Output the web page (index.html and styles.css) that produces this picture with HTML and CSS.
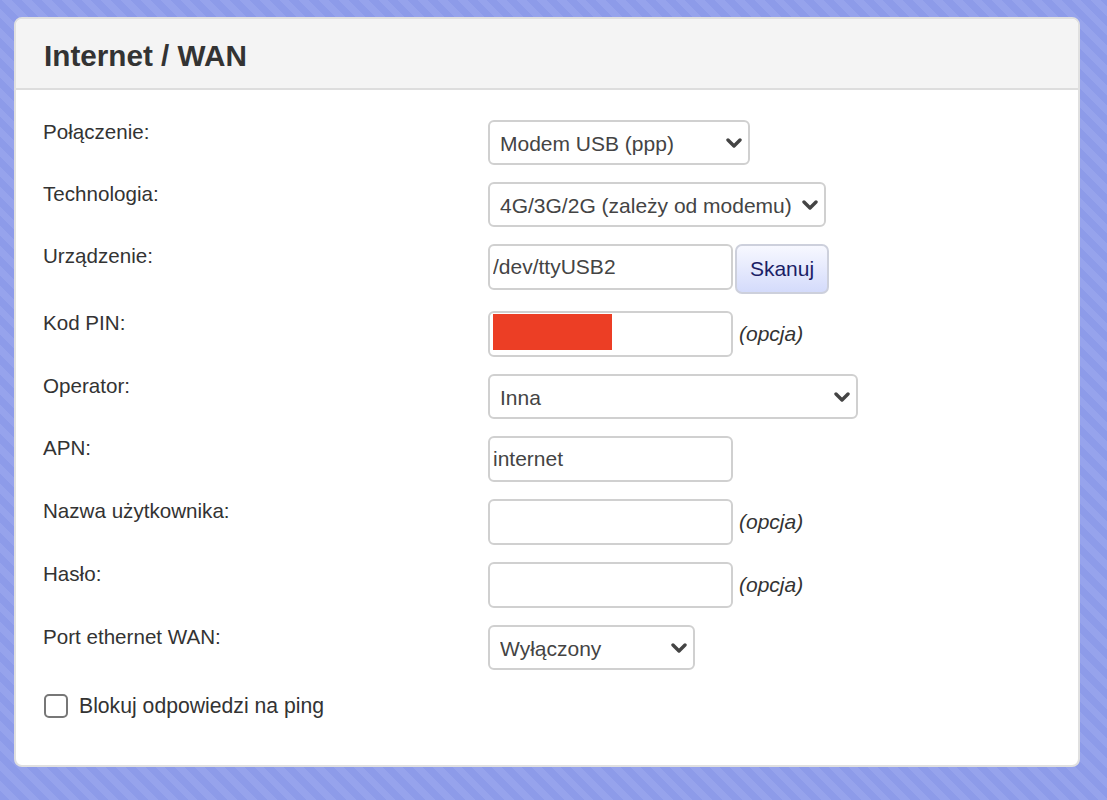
FILE: index.html
```html
<!DOCTYPE html>
<html lang="pl">
<head>
    <meta charset="UTF-8">
    <meta name="viewport" content="width=device-width, initial-scale=1.0">
    <title>Internet / WAN</title>
    <link rel="stylesheet" href="styles.css">
</head>
<body>
    <div class="card">
        <div class="card-head">
            <h1>Internet / WAN</h1>
        </div>
        <div class="card-body">
            <div class="row">
                <label class="label">Połączenie:</label>
                <div class="field">
                    <div class="select-wrap w-conn">
                        <select><option>Modem USB (ppp)</option></select>
                        <svg class="chevron" viewBox="0 0 16 10"><polyline points="2,2 8,8 14,2"/></svg>
                    </div>
                </div>
            </div>
            <div class="row">
                <label class="label">Technologia:</label>
                <div class="field">
                    <div class="select-wrap w-tech">
                        <select><option>4G/3G/2G (zależy od modemu)</option></select>
                        <svg class="chevron" viewBox="0 0 16 10"><polyline points="2,2 8,8 14,2"/></svg>
                    </div>
                </div>
            </div>
            <div class="row">
                <label class="label">Urządzenie:</label>
                <div class="field field-top">
                    <input type="text" class="text-input" value="/dev/ttyUSB2">
                    <button class="btn-scan">Skanuj</button>
                </div>
            </div>
            <div class="row">
                <label class="label">Kod PIN:</label>
                <div class="field">
                    <div class="input-wrap">
                        <input type="text" class="text-input" value="">
                        <span class="redacted"></span>
                    </div>
                    <span class="hint">(opcja)</span>
                </div>
            </div>
            <div class="row">
                <label class="label">Operator:</label>
                <div class="field">
                    <div class="select-wrap w-oper">
                        <select><option>Inna</option></select>
                        <svg class="chevron" viewBox="0 0 16 10"><polyline points="2,2 8,8 14,2"/></svg>
                    </div>
                </div>
            </div>
            <div class="row">
                <label class="label">APN:</label>
                <div class="field">
                    <input type="text" class="text-input" value="internet">
                </div>
            </div>
            <div class="row">
                <label class="label">Nazwa użytkownika:</label>
                <div class="field">
                    <input type="text" class="text-input" value="">
                    <span class="hint">(opcja)</span>
                </div>
            </div>
            <div class="row">
                <label class="label">Hasło:</label>
                <div class="field">
                    <input type="password" class="text-input" value="">
                    <span class="hint">(opcja)</span>
                </div>
            </div>
            <div class="row">
                <label class="label">Port ethernet WAN:</label>
                <div class="field">
                    <div class="select-wrap w-port">
                        <select><option>Wyłączony</option></select>
                        <svg class="chevron" viewBox="0 0 16 10"><polyline points="2,2 8,8 14,2"/></svg>
                    </div>
                </div>
            </div>
            <label class="check-row">
                <input type="checkbox" class="check">
                <span>Blokuj odpowiedzi na ping</span>
            </label>
        </div>
    </div>
</body>
</html>
```

FILE: styles.css
```css
html {
    background: repeating-linear-gradient(45deg, #8d9be9 0, #8d9be9 7px, #96a3ec 7px, #96a3ec 14px);
    min-height: 100%;
}

body {
    font-family: "Liberation Sans", Arial, Helvetica, sans-serif;
    color: #333;
    margin: 0;
    padding: 17px 27px 33px 14px;
}

.card {
    background-color: white;
    border: 2px solid #e0e0e0;
    border-radius: 8px;
    overflow: hidden;
}

.card-head {
    background-color: #f4f4f4;
    border-bottom: 2px solid #dddddd;
    padding: 19px 26px 14px 28px;
}

.card-head h1 {
    margin: 0;
    font-size: 29.7px;
    line-height: 36px;
    font-weight: bold;
    color: #333;
}

.card-body {
    padding: 30px 27px 47px;
}

.row {
    display: flex;
    align-items: flex-start;
    margin-bottom: 17px;
}

.label {
    width: 445px;
    flex-shrink: 0;
    font-size: 20.6px;
    line-height: 1.2;
    color: #333;
}

.field {
    display: flex;
    align-items: center;
}

.field-top {
    align-items: flex-start;
}

.text-input {
    box-sizing: border-box;
    width: 245px;
    height: 46px;
    padding: 0 3px;
    border: 2px solid #d0d0d0;
    border-radius: 6px;
    font-family: inherit;
    font-size: 21px;
    color: #444;
    outline: none;
    background: white;
}

.input-wrap {
    position: relative;
}

.redacted {
    position: absolute;
    left: 5px;
    top: 3px;
    width: 119px;
    height: 36px;
    background-color: #ec3e25;
}

.hint {
    margin-left: 6px;
    font-size: 21px;
    font-style: italic;
    color: #333;
}

.btn-scan {
    box-sizing: border-box;
    margin-left: 2px;
    width: 94px;
    height: 50px;
    border: 2px solid #cdd0dc;
    border-radius: 7px;
    background: linear-gradient(to bottom, #f7f8ff 0%, #d4dbfb 100%);
    color: #1b1e66;
    font-family: inherit;
    font-size: 21px;
    cursor: pointer;
}

.select-wrap {
    position: relative;
}

.select-wrap select {
    box-sizing: border-box;
    width: 100%;
    height: 45px;
    padding: 2px 30px 0 10px;
    border: 2px solid #d0d0d0;
    border-radius: 6px;
    background: white;
    font-family: inherit;
    font-size: 21px;
    color: #444;
    -webkit-appearance: none;
    appearance: none;
    outline: none;
}

.chevron {
    position: absolute;
    right: 8px;
    top: 18px;
    width: 16px;
    height: 10px;
    pointer-events: none;
}

.chevron polyline {
    fill: none;
    stroke: #444;
    stroke-width: 3.4;
    stroke-linecap: round;
    stroke-linejoin: round;
}

.w-conn { width: 262px; }
.w-tech { width: 338px; }
.w-oper { width: 370px; }
.w-port { width: 207px; }

.check-row {
    display: flex;
    align-items: center;
    padding-top: 7px;
    font-size: 21.2px;
    line-height: 24px;
    color: #333;
}

.check {
    -webkit-appearance: none;
    appearance: none;
    box-sizing: border-box;
    width: 24px;
    height: 24px;
    margin: 0 11px 0 1px;
    border: 2px solid #777;
    border-radius: 5px;
    background: white;
}
```
